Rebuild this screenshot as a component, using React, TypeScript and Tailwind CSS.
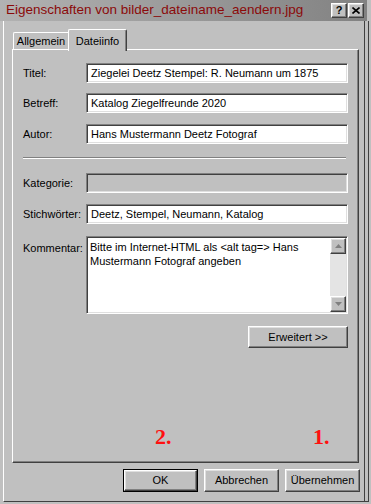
import React from "react";

const ui = "font-['Liberation_Sans',Arial,sans-serif] text-[11px] text-black";

const raised =
  "border border-t-white border-l-white border-r-[#404040] border-b-[#404040] shadow-[inset_-1px_-1px_0_#808080,inset_1px_1px_0_#dfdfdf] bg-[#c0c0c0]";

const sunken =
  "border border-t-[#808080] border-l-[#808080] border-r-white border-b-white shadow-[inset_1px_1px_0_#404040,inset_-1px_-1px_0_#dfdfdf]";

interface FieldRowProps {
  label: string;
  value?: string;
  disabled?: boolean;
  className?: string;
}

const FieldRow: React.FC<FieldRowProps> = ({ label, value, disabled, className }) => {
  return (
    <div className={`flex h-[20px] items-center ${className ?? ""}`}>
      <div className="w-[63px] shrink-0">{label}</div>
      <div
        className={`flex h-[20px] w-[262px] items-center px-[4px] ${sunken} ${
          disabled ? "bg-[#c0c0c0]" : "bg-white"
        }`}
      >
        <span className="whitespace-nowrap">{value}</span>
      </div>
    </div>
  );
};

const Arrow = ({ up }: { up: boolean }) => (
  <svg width="7" height="4" viewBox="0 0 7 4">
    {up ? (
      <polygon points="3.5,0 7,4 0,4" fill="#808080" />
    ) : (
      <polygon points="0,0 7,0 3.5,4" fill="#808080" />
    )}
  </svg>
);

const TitleButton = ({ children }: { children: React.ReactNode }) => (
  <div className={`flex h-[15px] w-[16px] items-center justify-center ${raised}`}>{children}</div>
);

const DialogButton = ({ label, isDefault }: { label: string; isDefault?: boolean }) => {
  if (isDefault) {
    return (
      <div className="h-[23px] w-[75px] border border-black">
        <div className={`flex h-full w-full items-center justify-center ${raised}`}>{label}</div>
      </div>
    );
  }
  return (
    <div className={`flex h-[23px] w-[75px] items-center justify-center ${raised}`}>{label}</div>
  );
};

export default function App() {
  return (
    <div className={`flex h-[504px] w-[371px] flex-col overflow-hidden bg-[#c0c0c0] ${ui}`}>
      {/* Title bar */}
      <div className="flex h-[21px] w-[367px] shrink-0 items-center bg-linear-to-r from-[#b2b2b2] to-[#828282] pl-[6px] pr-[3px]">
        <div className="flex-1 whitespace-nowrap text-[13.5px] text-[#8b0a0a]">
          Eigenschaften von bilder_dateiname_aendern.jpg
        </div>
        <div className="flex gap-[1px]">
          <TitleButton>
            <span className="text-[11px] font-bold leading-none">?</span>
          </TitleButton>
          <TitleButton>
            <svg width="8" height="7" viewBox="0 0 8 7">
              <path d="M0.5 0.5 L7.5 6.5 M7.5 0.5 L0.5 6.5" stroke="black" strokeWidth="1.6" />
            </svg>
          </TitleButton>
        </div>
      </div>

      {/* Window body */}
      <div className="ml-[3px] h-[481px] w-[366px] shrink-0 border-b border-l border-r border-b-[#404040] border-l-white border-r-[#404040]">
        <div className="mr-[3px] h-full border-r border-[#404040] pl-[8px] pt-[8px]">
          {/* Tabs */}
          <div className="flex h-[20px] items-end">
            <div className="ml-[1px] flex h-[17px] w-[55px] items-center justify-center rounded-tl-[2px] border-l border-t border-white">
              Allgemein
            </div>
            <div className="relative z-10 -mb-[2px] flex h-[22px] w-[59px] items-start justify-center rounded-tl-[2px] rounded-tr-[2px] border-l border-r border-t border-l-white border-r-[#404040] border-t-white bg-[#c0c0c0] pt-[3px] shadow-[inset_-1px_0_0_#808080]">
              Dateiinfo
            </div>
          </div>

          {/* Panel */}
          <div className="relative h-[414px] w-[347px] border border-b-[#404040] border-l-white border-r-[#404040] border-t-white pl-[10px] shadow-[inset_-1px_-1px_0_#808080]">
            <FieldRow label="Titel:" value="Ziegelei Deetz Stempel: R. Neumann um 1875" className="mt-[13px]" />
            <FieldRow label="Betreff:" value="Katalog Ziegelfreunde 2020" className="mt-[10px]" />
            <FieldRow label="Autor:" value="Hans Mustermann Deetz Fotograf" className="mt-[11px]" />

            <div className="mt-[13px] h-[2px] w-[323px] border-b border-t border-b-white border-t-[#808080]" />

            <FieldRow label="Kategorie:" disabled className="mt-[14px]" />
            <FieldRow label="Stichwörter:" value="Deetz, Stempel, Neumann, Katalog" className="mt-[11px]" />

            <div className="mt-[12px] flex">
              <div className="w-[63px] shrink-0 pt-[4px]">Kommentar:</div>
              <div className={`flex h-[78px] w-[262px] bg-white ${sunken}`}>
                <div className="flex-1 px-[3px] pt-[3px] leading-[14px]">
                  Bitte im Internet-HTML als &lt;alt tag=&gt; Hans
                  <br />
                  Mustermann Fotograf angeben
                </div>
                <div className="mr-[1px] my-[1px] flex w-[16px] flex-col bg-[#e4e4e4]">
                  <div className={`flex h-[16px] items-center justify-center ${raised}`}>
                    <Arrow up />
                  </div>
                  <div className="flex-1" />
                  <div className={`flex h-[16px] items-center justify-center ${raised}`}>
                    <Arrow up={false} />
                  </div>
                </div>
              </div>
            </div>

            <div className="mt-[12px] flex w-[325px] justify-end">
              <div className={`flex h-[22px] w-[100px] items-center justify-center ${raised}`}>
                Erweitert &gt;&gt;
              </div>
            </div>

            {/* annotations */}
            <div className="absolute left-[142px] top-[376px] font-['Liberation_Serif',serif] text-[22px] font-bold leading-none text-[#ff1010]">
              2.
            </div>
            <div className="absolute left-[300px] top-[376px] font-['Liberation_Serif',serif] text-[22px] font-bold leading-none text-[#ff1010]">
              1.
            </div>
          </div>

          {/* Dialog buttons */}
          <div className="mt-[6px] flex justify-end gap-[6px] pr-[4px]">
            <DialogButton label="OK" isDefault />
            <DialogButton label="Abbrechen" />
            <DialogButton label="Übernehmen" />
          </div>
        </div>
      </div>
    </div>
  );
}
